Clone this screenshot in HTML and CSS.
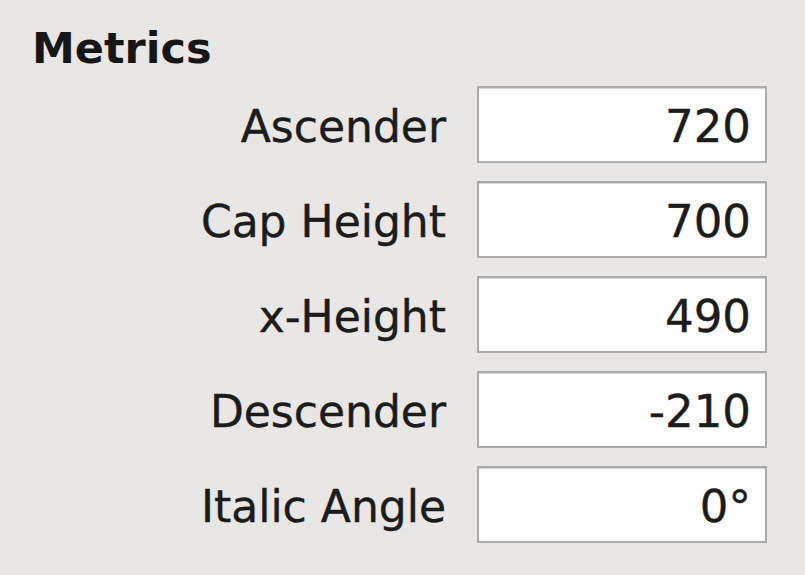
FILE: index.html
```html
<!DOCTYPE html>
<html>
<head>
<meta charset="utf-8">
<link rel="stylesheet" href="styles.css">
</head>
<body>
<div class="panel">
  <h1 class="title">Metrics</h1>
  <div class="form">
    <label class="label">Ascender</label>
    <div class="field">720</div>
    <label class="label">Cap Height</label>
    <div class="field">700</div>
    <label class="label">x-Height</label>
    <div class="field">490</div>
    <label class="label">Descender</label>
    <div class="field">-210</div>
    <label class="label">Italic Angle</label>
    <div class="field">0°</div>
  </div>
</div>
</body>
</html>
```
FILE: styles.css
```css
html, body {
  margin: 0;
  padding: 0;
  background: #e8e7e5;
}
body {
  width: 805px;
  height: 575px;
  overflow: hidden;
  font-family: "DejaVu Sans", "Liberation Sans", sans-serif;
  color: #1c1c1c;
}
.panel {
  padding-top: 23px;
}
.title {
  margin: 0 0 0 32px;
  font-size: 43px;
  line-height: 50px;
  font-weight: bold;
  color: #161616;
}
.form {
  margin-top: 13px;
  display: grid;
  grid-template-columns: 446px 290px;
  grid-auto-rows: 77px;
  column-gap: 31px;
  row-gap: 18px;
}
.label {
  font-size: 44px;
  text-align: right;
  align-self: center;
  padding-top: 4px;
  white-space: nowrap;
  -webkit-text-stroke: 0.4px #1c1c1c;
}
.field {
  box-sizing: border-box;
  background: #ffffff;
  border: 2px solid #ababab;
  box-shadow: inset 0 1px 0 #d6d6d6;
  font-size: 45px;
  padding: 4px 14px 0 0;
  display: flex;
  align-items: center;
  justify-content: flex-end;
  -webkit-text-stroke: 0.4px #1c1c1c;
}
```
